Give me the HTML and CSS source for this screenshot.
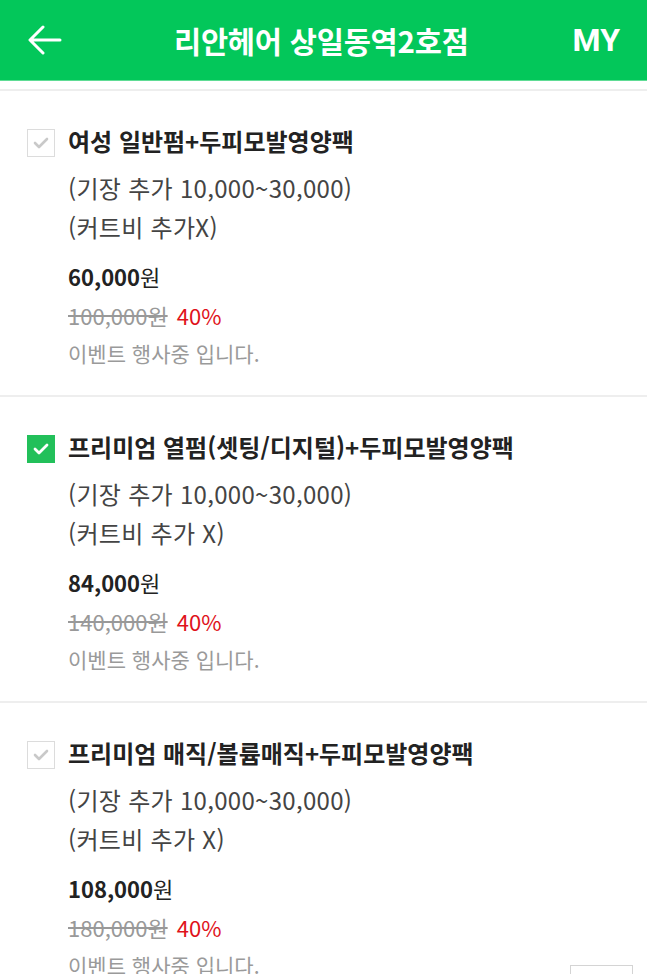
FILE: index.html
```html
<!DOCTYPE html>
<html lang="ko">
<head>
<meta charset="utf-8">
<title>리안헤어 상일동역2호점</title>
<link rel="stylesheet" href="styles.css">
</head>
<body>
<header class="topbar">
  <button class="back" aria-label="뒤로">
    <svg width="34" height="30" viewBox="0 0 34 30" fill="none" stroke="#fff" stroke-width="3" stroke-linecap="round" stroke-linejoin="round"><path d="M32 15H3M15 2L2 15l13 13"/></svg>
  </button>
  <h1 class="title">리안헤어 상일동역2호점</h1>
  <span class="my">MY</span>
</header>
<main class="list">
  <section class="item">
    <span class="check"><svg width="16" height="12" viewBox="0 0 16 12" fill="none" stroke="#c9c9c9" stroke-width="2.6" stroke-linecap="round" stroke-linejoin="round"><path d="M2 6l4 4 8-8"/></svg></span>
    <div class="info">
      <h2 class="name">여성 일반펌+두피모발영양팩</h2>
      <p class="desc">(기장 추가 10,000~30,000)<br>(커트비 추가X)</p>
      <p class="price">60,000<span class="won">원</span></p>
      <p class="orig"><s>100,000원</s> <span class="rate">40%</span></p>
      <p class="event">이벤트 행사중 입니다.</p>
    </div>
  </section>
  <section class="item">
    <span class="check on"><svg width="16" height="12" viewBox="0 0 16 12" fill="none" stroke="#fff" stroke-width="2.8" stroke-linecap="round" stroke-linejoin="round"><path d="M2 6l4 4 8-8"/></svg></span>
    <div class="info">
      <h2 class="name">프리미엄 열펌(셋팅/디지털)+두피모발영양팩</h2>
      <p class="desc">(기장 추가 10,000~30,000)<br>(커트비 추가 X)</p>
      <p class="price">84,000<span class="won">원</span></p>
      <p class="orig"><s>140,000원</s> <span class="rate">40%</span></p>
      <p class="event">이벤트 행사중 입니다.</p>
    </div>
  </section>
  <section class="item">
    <span class="check"><svg width="16" height="12" viewBox="0 0 16 12" fill="none" stroke="#c9c9c9" stroke-width="2.6" stroke-linecap="round" stroke-linejoin="round"><path d="M2 6l4 4 8-8"/></svg></span>
    <div class="info">
      <h2 class="name">프리미엄 매직/볼륨매직+두피모발영양팩</h2>
      <p class="desc">(기장 추가 10,000~30,000)<br>(커트비 추가 X)</p>
      <p class="price">108,000<span class="won">원</span></p>
      <p class="orig"><s>180,000원</s> <span class="rate">40%</span></p>
      <p class="event">이벤트 행사중 입니다.</p>
    </div>
  </section>
</main>
<div class="floating"></div>
</body>
</html>
```

FILE: styles.css
```css
* { box-sizing: border-box; }
html, body { margin: 0; padding: 0; background: #fff; }
body {
  font-family: "Noto Sans CJK KR", "Noto Sans", Roboto, sans-serif;
  color: #222;
  width: 647px;
  overflow: hidden;
}
.topbar {
  height: 81px;
  background: #03c75a;
  border-bottom: 1px solid #5fdc95;
  display: flex;
  align-items: center;
  justify-content: space-between;
  padding: 0 27px 0 28px;
}
.back {
  background: none;
  border: 0;
  padding: 0;
  width: 36px;
  height: 32px;
  display: flex;
  align-items: center;
}
.title {
  margin: 0;
  font-size: 29.5px;
  font-weight: 700;
  color: #fff;
  letter-spacing: -0.2px;
  padding-left: 6px;
}
.my {
  font-family: Roboto, "Noto Sans", sans-serif;
  font-size: 32px;
  font-weight: 700;
  color: #fff;
}
.list { padding-top: 8px; }
.item {
  border-top: 2px solid #eeeeee;
  display: flex;
  gap: 13px;
  padding: 35px 20px 25px 27px;
  height: 306px;
}
.check {
  flex: none;
  width: 28px;
  height: 28px;
  border: 1px solid #dcdcdc;
  background: #fff;
  display: flex;
  align-items: center;
  justify-content: center;
  margin-top: 3px;
}
.check.on { background: #22c05a; border-color: #22c05a; }
.info { display: flex; flex-direction: column; }
.name {
  margin: 0;
  font-size: 24px;
  line-height: 30px;
  font-weight: 700;
  color: #222;
  letter-spacing: 0;
  white-space: nowrap;
}
.desc {
  margin: 12px 0 0;
  font-size: 24px;
  line-height: 39px;
  color: #444;
  letter-spacing: 0.3px;
}
.price {
  margin: 11px 0 0;
  font-size: 22px;
  line-height: 39px;
  font-weight: 700;
  color: #222;
}
.won { font-weight: 400; }
.orig {
  margin: 0;
  font-size: 22px;
  line-height: 39px;
  color: #999;
}
.orig s { text-decoration-thickness: 1.5px; }
.rate { color: #e0121b; margin-left: 3px; }
.event {
  margin: 0;
  font-size: 21px;
  line-height: 36px;
  color: #9a9a9a;
}
.floating {
  position: fixed;
  left: 570px;
  top: 965px;
  width: 63px;
  height: 60px;
  border: 1px solid #d4d4d4;
  background: #fff;
}
```
